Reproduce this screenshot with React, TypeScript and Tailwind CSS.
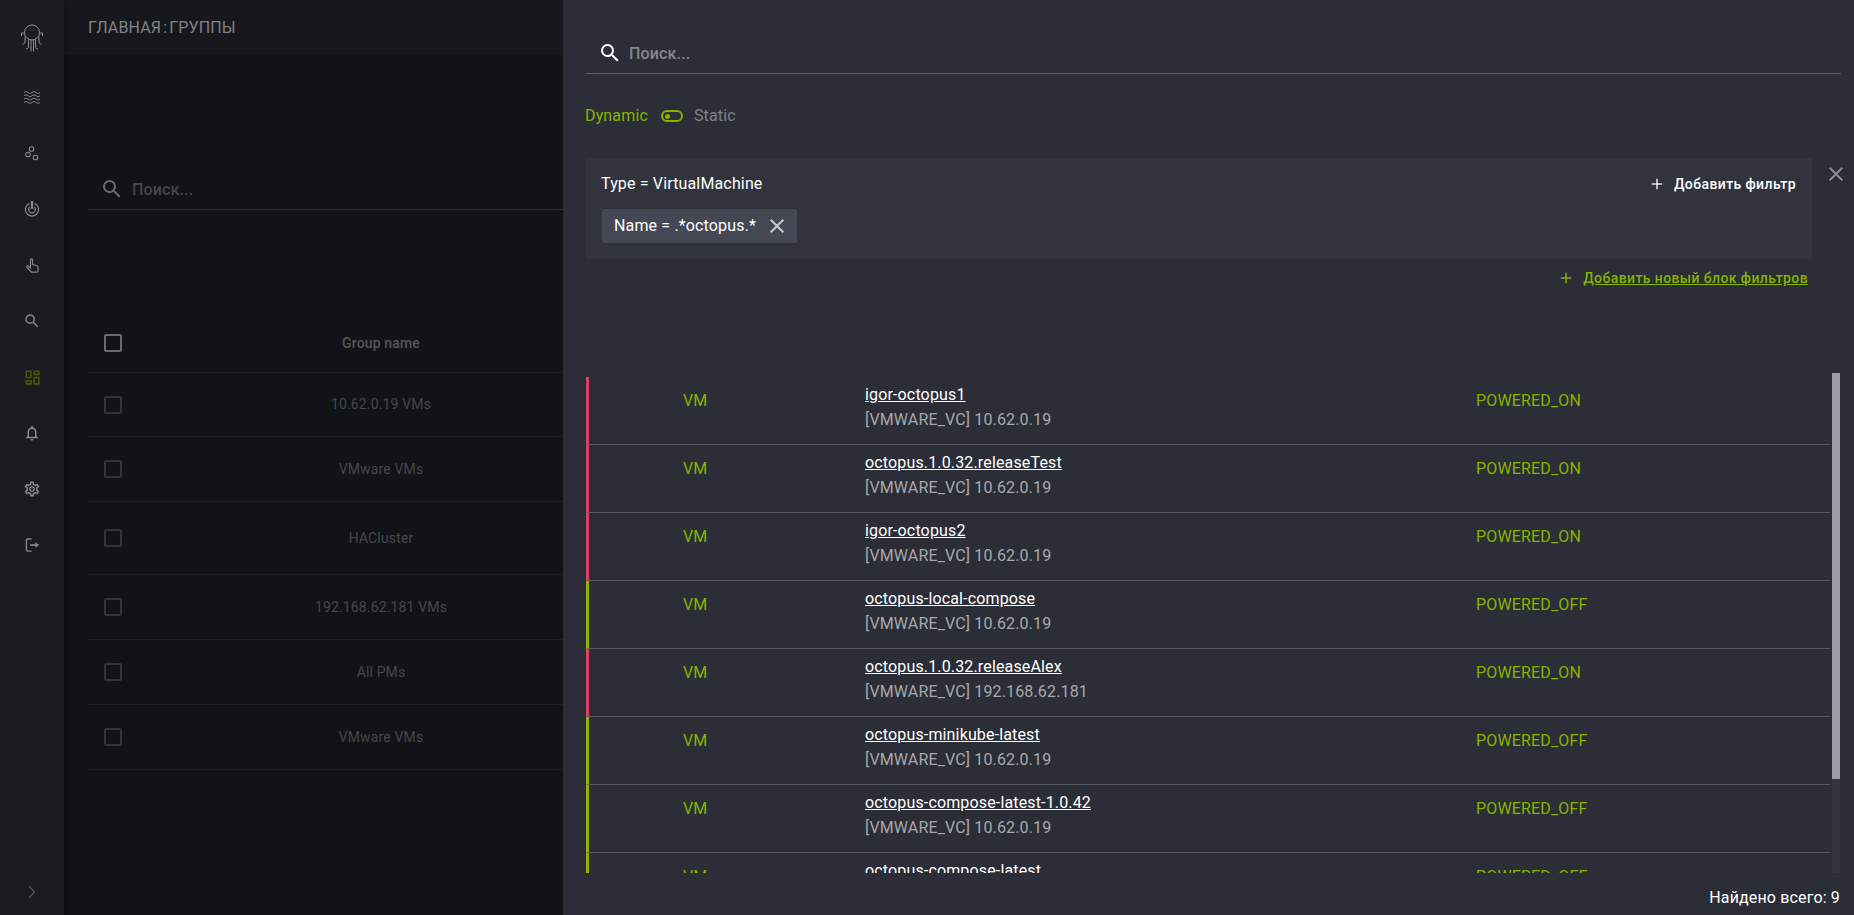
import type { ReactNode } from "react";
import {
  MdAdd,
  MdClose,
  MdNotificationsNone,
  MdOutlineDashboard,
  MdOutlineSettings,
  MdSearch,
} from "react-icons/md";

interface VmRow {
  name: string;
  host: string;
  status: string;
  on: boolean;
}

const VMS: VmRow[] = [
  { name: "igor-octopus1", host: "[VMWARE_VC] 10.62.0.19", status: "POWERED_ON", on: true },
  { name: "octopus.1.0.32.releaseTest", host: "[VMWARE_VC] 10.62.0.19", status: "POWERED_ON", on: true },
  { name: "igor-octopus2", host: "[VMWARE_VC] 10.62.0.19", status: "POWERED_ON", on: true },
  { name: "octopus-local-compose", host: "[VMWARE_VC] 10.62.0.19", status: "POWERED_OFF", on: false },
  { name: "octopus.1.0.32.releaseAlex", host: "[VMWARE_VC] 192.168.62.181", status: "POWERED_ON", on: true },
  { name: "octopus-minikube-latest", host: "[VMWARE_VC] 10.62.0.19", status: "POWERED_OFF", on: false },
  { name: "octopus-compose-latest-1.0.42", host: "[VMWARE_VC] 10.62.0.19", status: "POWERED_OFF", on: false },
  { name: "octopus-compose-latest", host: "[VMWARE_VC] 10.62.0.19", status: "POWERED_OFF", on: false },
];

const GROUPS = [
  { name: "10.62.0.19 VMs", h: "h-[64px]" },
  { name: "VMware VMs", h: "h-[65px]" },
  { name: "HACluster", h: "h-[73px]" },
  { name: "192.168.62.181 VMs", h: "h-[65px]" },
  { name: "All PMs", h: "h-[65px]" },
  { name: "VMware VMs", h: "h-[65px]" },
];

const ICON = "#85878b";

function OctopusIcon() {
  return (
    <svg width="24" height="28" viewBox="0 0 24 28" fill="none" stroke="#8b8d91" strokeWidth="1">
      <circle cx="12" cy="8.500" r="7.500" />
      <path d="M4.500 9H1.500V12M19.500 9h3V12" />
      <path d="M5 12.500V18c0 1.500-1 2-2.500 2M19 12.500V18c0 1.500 1 2 2.500 2" />
      <path d="M8.500 15V23c0 1.300-1 2-2.500 2M15.500 15V23c0 1.300 1 2 2.500 2" />
      <path d="M11 16V27.500M13.500 16V27.500" />
    </svg>
  );
}

function WavesIcon() {
  return (
    <svg width="16" height="13" viewBox="0 0 16 13" fill="none" stroke={ICON} strokeWidth="1">
      <path d="M0 1.500c1.300-1.200 2.600-1.200 4 0s2.700 1.200 4 0 2.700-1.200 4 0 2.700 1.200 4 0" />
      <path d="M0 4.800c1.300-1.200 2.600-1.200 4 0s2.700 1.200 4 0 2.700-1.200 4 0 2.700 1.200 4 0" />
      <path d="M0 8.100c1.300-1.200 2.600-1.200 4 0s2.700 1.200 4 0 2.700-1.200 4 0 2.700 1.200 4 0" />
      <path d="M0 11.400c1.300-1.200 2.600-1.200 4 0s2.700 1.200 4 0 2.700-1.200 4 0 2.700 1.200 4 0" />
    </svg>
  );
}

function BubblesIcon() {
  return (
    <svg width="14" height="15" viewBox="0 0 14 15" fill="none" stroke={ICON} strokeWidth="1.100">
      <circle cx="6.500" cy="3" r="2.300" />
      <circle cx="3" cy="8.500" r="2.300" />
      <circle cx="10.500" cy="11.500" r="2.300" />
    </svg>
  );
}

function RadarIcon() {
  return (
    <svg width="16" height="17" viewBox="0 0 16 18" fill="none" stroke={ICON} strokeWidth="1.300">
      <path d="M5.300 2.500a7 7 0 1 0 5.400 0" />
      <path d="M5.600 6.300a3.600 3.600 0 1 0 4.800 0" />
      <path d="M8 0v8.500" strokeWidth="2.400" />
    </svg>
  );
}

function PointerIcon() {
  return (
    <svg width="13" height="15" viewBox="0 0 13 15" fill="none" stroke={ICON} strokeWidth="1.200">
      <path d="M4.500 1.500c0-1 2-1 2 0v5l4 1c1 .3 1.500 1 1.500 2V13c0 .6-.5 1.200-1 1.200H5.500L1 9.500c-.8-1 .5-2 1.500-1.200l2 1.700z" />
    </svg>
  );
}

function ExitIcon() {
  return (
    <svg width="15" height="15" viewBox="0 0 15 16" fill="none" stroke={ICON} strokeWidth="1.500">
      <path d="M6.500 1H2.200C1.500 1 1 1.500 1 2.200v10.600c0 .7.500 1.200 1.200 1.200h4.300" />
      <path d="M5 7.500h6" strokeWidth="1.800" />
      <path d="M10.500 4.300L14.500 7.500 10.500 10.700z" fill={ICON} stroke="none" />
    </svg>
  );
}

function SideIcon({ children }: { children: ReactNode }) {
  return <div className="flex h-[56px] items-center justify-center">{children}</div>;
}

function Sidebar() {
  return (
    <div className="z-10 flex w-[64px] shrink-0 flex-col items-stretch bg-[#1a1c21] shadow-[2px_0_6px_rgba(0,0,0,0.35)]">
      <div className="mt-[13px] flex h-[50px] items-center justify-center">
        <OctopusIcon />
      </div>
      <div className="mt-[6px]">
        <SideIcon><WavesIcon /></SideIcon>
        <SideIcon><BubblesIcon /></SideIcon>
        <SideIcon><RadarIcon /></SideIcon>
        <SideIcon><PointerIcon /></SideIcon>
        <SideIcon><MdSearch size={18} color={ICON} /></SideIcon>
        <SideIcon><MdOutlineDashboard size={19} color="#4a5700" /></SideIcon>
        <SideIcon><MdNotificationsNone size={18} color={ICON} /></SideIcon>
        <SideIcon><MdOutlineSettings size={18} color={ICON} /></SideIcon>
        <SideIcon><ExitIcon /></SideIcon>
      </div>
      <div className="mt-auto flex h-[30px] items-start justify-center">
        <svg width="8" height="14" viewBox="0 0 8 14" fill="none" stroke="#55575b" strokeWidth="1.200">
          <path d="M1 1l5.500 6L1 13" />
        </svg>
      </div>
    </div>
  );
}

function MainBehind() {
  return (
    <div className="flex min-w-0 flex-1 flex-col overflow-hidden bg-[#121317]">
      <div className="flex h-[55px] shrink-0 items-center bg-[#17181d] pl-[24px] text-[16px] tracking-[0.15px] text-[#808285]">
        <span>ГЛАВНАЯ</span>
        <span className="mx-[2px]">:</span>
        <span>ГРУППЫ</span>
      </div>
      <div className="ml-[24px] mt-[114px] flex h-[41px] shrink-0 items-center gap-[8px] border-b border-[#2b2c30] pl-[12px]">
        <MdSearch size={24} color="#6a6b6e" />
        <span className="mt-[1px] text-[16px] font-medium tracking-[0.15px] text-[#45464a]">Поиск...</span>
      </div>
      <div className="ml-[24px] mt-[101px] flex h-[62px] shrink-0 items-center border-b border-[#1d1f24] pt-[3px]">
        <div className="ml-[16px] h-[18px] w-[18px] shrink-0 rounded-[2px] border-2 border-[#6a6b6e]" />
        <div className="w-[518px] shrink-0 text-center text-[14px] font-medium tracking-[0.15px] text-[#55565a]">Group name</div>
      </div>
      {GROUPS.map((g, i) => (
        <div key={i} className={`ml-[24px] flex ${g.h} shrink-0 items-center border-b border-[#1d1f24]`}>
          <div className="ml-[16px] h-[18px] w-[18px] shrink-0 rounded-[2px] border-2 border-[#333438]" />
          <div className="w-[518px] shrink-0 text-center text-[14px] tracking-[0.15px] text-[#45464a]">{g.name}</div>
        </div>
      ))}
    </div>
  );
}

function Row({ vm }: { vm: VmRow }) {
  return (
    <div
      className={`flex h-[68px] shrink-0 border-b border-l-[3px] border-r-[3px] border-b-[#55575f] border-r-transparent ${
        vm.on ? "border-l-[#dd3f67]" : "border-l-[#8fb300]"
      }`}
    >
      <div className="w-[94px] shrink-0" />
      <div className="w-[182px] shrink-0 pt-[12px] text-[#86b300]">VM</div>
      <div className="w-[611px] shrink-0 pt-[6px]">
        <div className="text-white underline">{vm.name}</div>
        <div className="mt-[1px] text-[#a6a8ad]">{vm.host}</div>
      </div>
      <div className="pt-[12px] text-[#86b300]">{vm.status}</div>
    </div>
  );
}

function Drawer() {
  return (
    <div className="relative flex w-[1291px] shrink-0 flex-col bg-[#2b2e36] text-[16px] leading-[24px] tracking-[0.15px]">
      <div className="ml-[23px] mr-[13px] mt-[33px] flex h-[41px] shrink-0 items-center gap-[7px] border-b border-[#5a5c64] pl-[12px]">
        <MdSearch size={24} color="#ffffff" />
        <span className="mt-[1px] font-medium text-[#85878d]">Поиск...</span>
      </div>

      <div className="ml-[22px] mt-[30px] flex h-[24px] shrink-0 items-center">
        <span className="text-[#86b300]">Dynamic</span>
        <div className="ml-[13px] flex h-[12px] w-[22px] items-center rounded-full border-2 border-[#86b300] pl-[2px]">
          <div className="h-[5px] w-[5px] rounded-full bg-[#86b300]" />
        </div>
        <span className="ml-[11px] text-[#7f828c]">Static</span>
      </div>

      <div className="ml-[23px] mr-[42px] mt-[30px] flex h-[101px] shrink-0 flex-col bg-[#31343d] pl-[16px] pr-[16px]">
        <div className="flex h-[51px] shrink-0 items-center justify-between">
          <span className="ml-[-1px] text-white">Type = VirtualMachine</span>
          <div className="flex items-center gap-[8px]">
            <MdAdd size={18} color="#e4e5e7" />
            <span className="text-[14px] font-medium tracking-[0.4px] text-white">Добавить фильтр</span>
          </div>
        </div>
        <div className="flex h-[34px] w-[195px] items-center justify-between rounded-[2px] bg-[#444854] pl-[12px] pr-[8px]">
          <span className="text-white">Name = .*octopus.*</span>
          <MdClose size={24} color="#c9cacd" />
        </div>
      </div>

      <div className="absolute right-[6px] top-[162px]">
        <MdClose size={24} color="#8b8d94" />
      </div>

      <div className="mr-[46px] mt-[10px] flex h-[18px] shrink-0 items-center justify-end gap-[8px]">
        <MdAdd size={18} color="#86a81a" />
        <span className="text-[14px] font-medium tracking-[0.4px] text-[#86b300] underline">Добавить новый блок фильтров</span>
      </div>

      <div className="ml-[23px] mr-[14px] mt-[86px] flex h-[500px] shrink-0 overflow-hidden">
        <div className="flex min-w-0 flex-1 flex-col overflow-hidden pt-[4px]">
          {VMS.map((vm) => (
            <Row key={vm.name} vm={vm} />
          ))}
        </div>
        <div className="w-[8px] shrink-0 bg-[#32353e]">
          <div className="h-[406px] bg-[#9b9da6]" />
        </div>
      </div>

      <div className="mr-[14px] mt-[13px] text-right text-white">Найдено всего: 9</div>
    </div>
  );
}

export default function App() {
  return (
    <div className="flex h-[915px] w-[1854px] overflow-hidden font-['Roboto',sans-serif]">
      <Sidebar />
      <MainBehind />
      <Drawer />
    </div>
  );
}
